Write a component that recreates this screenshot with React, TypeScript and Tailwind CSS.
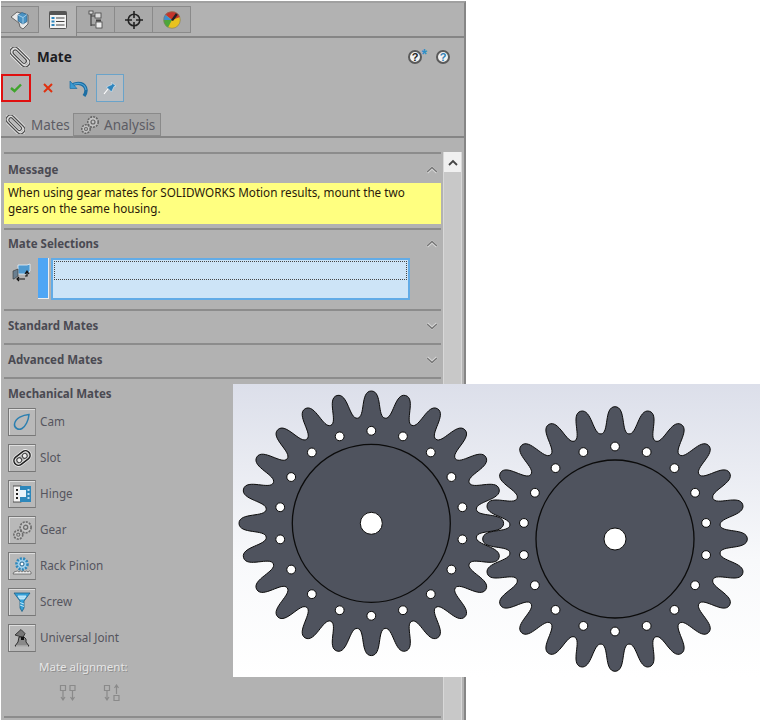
import type { ReactNode } from "react"

function gearPath(cx: number, cy: number) {
  // one tooth flank as a cubic in (degrees, radius), root to tip, then mirrored
  const flank = (t: number): [number, number] => {
    const u = 1 - t
    const deg = u * u * u * -7.5 + 3 * u * u * t * -3 + 3 * u * t * t * -4.9
    const r = 106 + 26.3 * (3 * u * t * t + t * t * t)
    return [deg, r]
  }
  const half: [number, number][] = []
  for (let i = 0; i <= 16; i++) half.push(flank(i / 16))
  const profile = [...half, ...half.slice(0, -1).reverse().slice(0, -1).map(([d, r]): [number, number] => [-d, r])]

  let d = ""
  for (let t = 0; t < 24; t++) {
    for (const [deg, r] of profile) {
      const a = ((t * 15 + deg) * Math.PI) / 180
      d += `${d ? "L" : "M"}${(cx + r * Math.cos(a)).toFixed(2)} ${(cy + r * Math.sin(a)).toFixed(2)}`
    }
  }
  return d + "Z"
}

function Gear({ cx, cy }: { cx: number; cy: number }) {
  const holes = Array.from({ length: 18 }, (_, i) => {
    const a = ((i * 20 + 10) * Math.PI) / 180
    return [cx + 92.5 * Math.cos(a), cy + 92.5 * Math.sin(a)]
  })
  return (
    <g stroke="#0b0b0b" fill="#4f535e">
      <path d={gearPath(cx, cy)} strokeWidth="1" />
      <circle cx={cx} cy={cy} r="79" strokeWidth="1.3" fill="none" />
      <circle cx={cx} cy={cy} r="11" strokeWidth="1" fill="#fff" />
      {holes.map(([x, y], i) => (
        <circle key={i} cx={x} cy={y} r="4.4" strokeWidth="1" fill="#fff" />
      ))}
    </g>
  )
}

function Clip({ size = 20 }: { size?: number }) {
  return (
    <svg width={size} height={size} viewBox="0 0 20 20" fill="none">
      <g transform="rotate(45 10 10)">
        <rect x="-2" y="5.500" width="24" height="9" rx="4.500" stroke="#ececec" strokeWidth="3" />
        <rect x="1" y="7.800" width="17" height="4.400" rx="2.200" stroke="#ececec" strokeWidth="2.600" />
        <rect x="-2" y="5.500" width="24" height="9" rx="4.500" stroke="#4d4d4d" strokeWidth="1.300" />
        <rect x="1" y="7.800" width="17" height="4.400" rx="2.200" stroke="#4d4d4d" strokeWidth="1.300" />
      </g>
    </svg>
  )
}

function Cogs({ size = 20, color = "#666" }: { size?: number; color?: string }) {
  return (
    <svg width={size} height={size} viewBox="0 0 20 20" fill="none" stroke={color}>
      <circle cx="13" cy="7" r="5.200" strokeWidth="1.600" strokeDasharray="2 1" fill="#c4c4c4" />
      <circle cx="13" cy="7" r="2" strokeWidth="1.200" />
      <circle cx="6" cy="14" r="4.200" strokeWidth="1.600" strokeDasharray="2 1" fill="#c4c4c4" />
      <circle cx="6" cy="14" r="1.500" strokeWidth="1.100" />
    </svg>
  )
}

function PartIcon() {
  return (
    <svg width="20" height="20" viewBox="0 0 20 20">
      <path d="M1 7 7 2l11 3v9l-5 5-3-2-1-4Z" fill="#e8e8e8" stroke="#666" />
      <path d="M8 5 12 2.500l5 2v7l-4 2.500-5-3Z" fill="#4a93c4" stroke="#2c5f85" strokeWidth=".7" />
      <path d="M8 5l5 2.500V14M13 7.500l4-3" stroke="#b6dcf2" strokeWidth=".8" fill="none" />
    </svg>
  )
}

function PropertyIcon() {
  return (
    <svg width="18" height="18" viewBox="0 0 18 18">
      <rect x=".5" y=".5" width="17" height="17" rx="1" fill="#f4f4f4" stroke="#555" />
      <rect x=".5" y=".5" width="17" height="3.500" fill="#555" />
      <path d="M2.500 6h3v2h-3ZM2.500 9.500h3v2h-3ZM2.500 13h3v2h-3Z" fill="#2f86bd" />
      <path d="M7 7h8.500M7 10.500h8.500M7 14h8.500" stroke="#444" strokeWidth="1.200" />
    </svg>
  )
}

function ConfigIcon() {
  return (
    <svg width="16" height="20" viewBox="0 0 16 20">
      <path d="M3 2v14M3 6h4M3 15h4" stroke="#444" strokeWidth="1.200" fill="none" />
      <rect x="1" y="1" width="4" height="3" fill="#ddd" stroke="#444" strokeWidth=".8" />
      <rect x="7" y="3" width="6" height="5" fill="#ddd" stroke="#444" strokeWidth=".8" />
      <rect x="8" y="12" width="6" height="6" fill="#eee" stroke="#444" strokeWidth=".8" />
      <path d="M8 9.500h5v2H8Z" fill="#444" />
    </svg>
  )
}

function TargetIcon() {
  return (
    <svg width="20" height="20" viewBox="0 0 20 20" fill="none" stroke="#222">
      <circle cx="10" cy="10" r="5.800" strokeWidth="1.600" />
      <path d="M10 1v7M10 12v7M1 10h7M12 10h7" strokeWidth="1.600" />
    </svg>
  )
}

function AppearanceIcon() {
  return (
    <svg width="18" height="18" viewBox="0 0 18 18">
      <circle cx="9" cy="9" r="8.500" fill="#e8c21f" />
      <path d="M9 9 2 3.500A8.500 8.500 0 0 1 9 .5Z" fill="#c6352a" />
      <path d="M9 9 .5 9A8.500 8.500 0 0 1 2 3.500Z" fill="#3f8fcf" />
      <path d="M9 9 .5 9A8.500 8.500 0 0 0 5 16.500Z" fill="#4da63a" />
      <path d="M9 .5A8.500 8.500 0 0 1 17 6L9 9Z" fill="#c6352a" />
      <path d="M8 9 13 2l2 1.500L10 10Z" fill="#222" />
      <circle cx="9" cy="9" r="8.300" fill="none" stroke="#777" strokeWidth=".6" />
    </svg>
  )
}

function Help({ star }: { star?: boolean }) {
  return (
    <span className="relative flex h-[14px] w-[14px] items-center justify-center rounded-full border-2 border-[#5a5a5a] bg-[#f2f2f2] font-['Liberation_Sans',sans-serif] text-[11px] font-bold leading-none">
      <span className={star ? "text-[#222]" : "text-[#2f7fb5]"}>?</span>
      {star && <span className="absolute -top-[5px] -right-[7px] text-[14px] leading-none text-[#2f8fc9]">*</span>}
    </span>
  )
}

function Caret({ up }: { up?: boolean }) {
  return (
    <svg width="12" height="8" viewBox="0 0 12 8" fill="none" className="mr-[2px]">
      <path d={up ? "M1 6.500 6 2l5 4.500" : "M1 1.500 6 6l5-4.500"} stroke="#f0f0f0" strokeWidth="3" opacity=".6" />
      <path d={up ? "M1 6 6 1.500 11 6" : "M1 2 6 6.500 11 2"} stroke="#777" strokeWidth="1.600" />
    </svg>
  )
}

function SectionHead({ title, up, className }: { title: string; up?: boolean; className: string }) {
  return (
    <div className={`flex items-center justify-between border-t-2 border-[#8c8c8c] pl-1 pr-[1px] ${className}`}>
      <span className="text-[11.5px] font-bold leading-none text-[#4a4a52]">{title}</span>
      <Caret up={up} />
    </div>
  )
}

function CamIcon() {
  return (
    <svg width="18" height="18" viewBox="0 0 18 18" fill="none">
      <path d="M16 1.500C10 2 2.500 5 1.500 11c-.5 4 4 6.500 7.500 4.500C12.500 13.500 15.500 7.500 16 1.500Z" stroke="#2b7fb0" strokeWidth="1.500" />
    </svg>
  )
}

function SlotIcon() {
  return (
    <svg width="20" height="20" viewBox="0 0 20 20" fill="none">
      <g transform="rotate(-38 10 10)">
        <rect x="1" y="5.500" width="18" height="9" rx="4.500" stroke="#eee" strokeWidth="3.200" />
        <rect x="1" y="5.500" width="18" height="9" rx="4.500" stroke="#222" strokeWidth="1.600" />
        <circle cx="6.500" cy="10" r="2.400" fill="#eee" stroke="#444" />
        <circle cx="13.500" cy="10" r="2.400" fill="#eee" stroke="#444" />
      </g>
    </svg>
  )
}

function HingeIcon() {
  return (
    <svg width="18" height="18" viewBox="0 0 18 18">
      <rect x="0" y="1" width="8" height="16" fill="#f4f4f4" stroke="#333" strokeWidth=".8" />
      <rect x="7" y="1" width="11" height="16" fill="#2d87bb" />
      <rect x="6" y="5" width="7" height="7" fill="#e8f3fa" />
      <path d="M3 4h2v2H3ZM3 8h2v2H3ZM3 12h2v2H3Z" fill="#222" />
      <path d="M14.500 4h2v2h-2ZM14.500 8h2v2h-2ZM14.500 12h2v2h-2Z" fill="#bcdcef" />
    </svg>
  )
}

function RackIcon() {
  return (
    <svg width="20" height="20" viewBox="0 0 20 20" fill="none">
      <circle cx="10" cy="8" r="5.500" stroke="#2d87bb" strokeWidth="2.600" strokeDasharray="2 1.300" fill="#9fd0ec" />
      <circle cx="10" cy="8" r="2" fill="#fff" stroke="#1f5f86" />
      <path d="M1 18h18v-2l-1.500-1-1.500 1-1.500-1-1.500 1-1.500-1-1.500 1-1.500-1-1.500 1-1.500-1L2 16Z" fill="#eee" stroke="#555" strokeWidth=".7" />
    </svg>
  )
}

function ScrewIcon() {
  return (
    <svg width="18" height="20" viewBox="0 0 18 20">
      <path d="M1 1h16L11 9v7l-2 3.500L7 16V9Z" fill="#35a0d8" stroke="#1d5f86" strokeWidth=".8" />
      <path d="M5 4h8L11 7H7ZM7 10.500l4 1.500M7 13l4 1.500" fill="#a9dcf5" stroke="#cfeefc" strokeWidth=".9" />
    </svg>
  )
}

function UJointIcon() {
  return (
    <svg width="18" height="20" viewBox="0 0 18 20">
      <path d="M2 7 8 1.500l4 4-2 4Z" fill="#777" stroke="#222" strokeWidth=".8" />
      <path d="M6 9h5l2 2v3l3 4H2l3-4Z" fill="#8a8a8a" stroke="#222" strokeWidth=".9" />
      <rect x="8" y="9" width="3" height="3" fill="#111" />
      <path d="M3 18h12" stroke="#eee" />
    </svg>
  )
}

function MateButton({ icon, label }: { icon: ReactNode; label: string }) {
  return (
    <div className="flex h-[36px] items-start pl-1">
      <div className="flex h-[28px] w-[28px] items-center justify-center border border-[#777] border-r-[#8a8a8a] bg-[#b9b9b9] shadow-[inset_1px_1px_0_#dedede]">
        {icon}
      </div>
      <span className="ml-[4px] mt-[8px] text-[11.7px] leading-none text-[#55555e]">{label}</span>
    </div>
  )
}

function AlignIcon({ flip }: { flip?: boolean }) {
  return (
    <svg width="18" height="18" viewBox="0 0 18 18" fill="none" stroke="#8a8a8a" strokeWidth="1.200">
      <path d="M1.500 1.500h5v5h-5ZM4 7v8M2 13l2 3 2-3" />
      {flip ? (
        <path d="M11 11.500h5v5h-5ZM13.500 10V2M11.500 4l2-3 2 3" />
      ) : (
        <path d="M11 1.500h5v5h-5ZM13.500 7v8M11.500 13l2 3 2-3" />
      )}
    </svg>
  )
}

export default function App() {
  const tabs = [<PartIcon key="a" />, <PropertyIcon key="b" />, <ConfigIcon key="c" />, <TargetIcon key="d" />, <AppearanceIcon key="e" />]

  return (
    <div className="relative h-[720px] w-[760px] overflow-hidden bg-white font-['Noto_Sans','Open_Sans',sans-serif]">
      <div className="ml-[1px] mt-[1px] flex h-[719px] w-[465px] flex-col overflow-hidden border-t-2 border-r-2 border-t-[#a0a0a0] border-r-[#868686] bg-[#b2b2b2]">
        {/* feature manager tabs */}
        <div className="flex h-[35px] shrink-0 items-end border-b-2 border-[#858585]">
          <div className="flex h-[30px] items-stretch pb-[3px]">
            {tabs.map((t, i) => (
              <div
                key={i}
                className={
                  i === 1
                    ? "-mb-[3px] flex w-[38px] items-center justify-center border-r border-[#868686] bg-[#b4b4b4] pb-[3px]"
                    : "flex w-[38px] items-center justify-center border-y border-r border-[#8a8a8a] bg-[#a9a9a9]"
                }
              >
                {t}
              </div>
            ))}
          </div>
        </div>

        <div className="flex h-[36px] shrink-0 items-center pl-[9px] pr-[14px] pt-[2px]">
          <Clip />
          <span className="ml-[7px] mt-[2px] text-[13.5px] font-bold leading-none text-[#1c1c22]">Mate</span>
          <div className="ml-auto flex items-center gap-[14px]">
            <Help star />
            <Help />
          </div>
        </div>

        {/* ok / cancel row */}
        <div className="flex h-[28px] shrink-0 items-center">
          <div className="flex h-[28px] w-[30px] items-center justify-center border-2 border-[#e01010]">
            <svg width="12" height="10" viewBox="0 0 12 10" fill="none">
              <path d="M1 5l3.500 3L11 1.500" stroke="#3fa52c" strokeWidth="2.400" />
            </svg>
          </div>
          <div className="flex w-[33px] items-center justify-center">
            <svg width="10" height="10" viewBox="0 0 10 10" fill="none">
              <path d="M1 1l8 8M9 1 1 9" stroke="#e0300f" strokeWidth="2" />
            </svg>
          </div>
          <div className="flex w-[28px] items-center justify-center">
            <svg width="19" height="19" viewBox="0 0 19 19" fill="none">
              <path d="M3 6c6-3 13-2 14 5 .2 2-.6 4-2 6" stroke="#1d6ea3" strokeWidth="3.400" />
              <path d="M3 6c6-3 13-2 14 5" stroke="#4fa4d6" strokeWidth="1.200" />
              <path d="M1 2V9.500h7Z" fill="#3b9ad2" stroke="#1d6ea3" strokeWidth=".7" />
            </svg>
          </div>
          <div className="ml-[4px] flex h-[28px] w-[28px] items-center justify-center border border-[#6aa3c9] bg-[#b8bcc0]">
            <svg width="14" height="14" viewBox="0 0 14 14">
              <path d="M1 13l4-5" stroke="#fff" strokeWidth="1.200" />
              <path d="M3.500 6 9 3.500 8.500 1.500 13 5l-2 .5-2.500 5.500Z" fill="#2d84bd" stroke="#eef6fb" strokeWidth=".5" />
            </svg>
          </div>
        </div>

        {/* mates / analysis tabs */}
        <div className="mt-[11px] flex h-[25px] shrink-0 items-stretch border-b-2 border-[#858585]">
          <div className="-mb-[2px] flex w-[73px] items-center border-r border-[#8a8a8a] pl-[5px] pb-[2px]">
            <Clip size={19} />
            <span className="ml-[6px] mt-[2px] text-[13.5px] leading-none text-[#5c5c64]">Mates</span>
          </div>
          <div className="flex w-[87px] items-center border-y border-r border-[#8a8a8a] bg-[#a6a6a6] pl-[6px]">
            <Cogs size={20} />
            <span className="ml-[4px] mt-[2px] text-[13.5px] leading-none text-[#5c5c64]">Analysis</span>
          </div>
        </div>

        {/* body and scrollbar */}
        <div className="mt-[14px] flex min-h-0 flex-1">
          <div className="w-[440px] shrink-0 pl-[3px]">
            <SectionHead title="Message" up className="h-[31px] pt-[2px]" />
            <div className="h-[41px] bg-[#ffff80] pl-1 pt-[1px] text-[11.7px] leading-[16px] text-[#2a1a0a]">
              When using gear mates for SOLIDWORKS Motion results, mount the two
              <br />
              gears on the same housing.
            </div>
            <div className="h-[4px]" />
            <SectionHead title="Mate Selections" up className="h-[30px]" />
            <div className="flex h-[51px] items-start">
              <div className="flex w-[34px] justify-center pl-[2px] pt-[4px]">
                <svg width="20" height="20" viewBox="0 0 20 20">
                  <path d="M6 3h9l3-1v7l-3 3H6Z" fill="#4f9ad0" stroke="#e8f3fa" strokeWidth=".8" />
                  <path d="M1 9l5-2v7l-4 3H1Z" fill="#6a7f90" stroke="#333" strokeWidth=".6" />
                  <path d="M5 17h8M7 15l-2 2 2 2M15 9v5h-2M13 12l2-3 2 3" stroke="#111" strokeWidth="1.200" fill="none" />
                </svg>
              </div>
              <div className="h-[41px] w-[11px] border-r border-b border-[#eeeeee] bg-[#4ea6f5]" />
              <div className="ml-[2px] h-[42px] w-[359px] border-2 border-[#62abe6] bg-[#cde4f7] p-[1px]">
                <div className="h-[19px] border border-dotted border-[#444]" />
              </div>
            </div>
            <SectionHead title="Standard Mates" className="h-[34px] pb-[2px]" />
            <SectionHead title="Advanced Mates" className="h-[34px] pb-[2px]" />
            <div className="border-t-2 border-[#8c8c8c] pl-1 pt-[8px] text-[11.5px] font-bold leading-[13px] text-[#4a4a52]">
              Mechanical Mates
            </div>
            <div className="mt-[8px]">
              <MateButton icon={<CamIcon />} label="Cam" />
              <MateButton icon={<SlotIcon />} label="Slot" />
              <MateButton icon={<HingeIcon />} label="Hinge" />
              <MateButton icon={<Cogs size={21} color="#6e6e6e" />} label="Gear" />
              <MateButton icon={<RackIcon />} label="Rack Pinion" />
              <MateButton icon={<ScrewIcon />} label="Screw" />
              <MateButton icon={<UJointIcon />} label="Universal Joint" />
            </div>
            <div className="pl-[35px] text-[11.5px] leading-[14px] text-[#e6e6e6] [text-shadow:1px_1px_0_#8f8f8f]">
              Mate alignment:
            </div>
            <div className="mt-[10px] flex gap-[26px] pl-[55px]">
              <AlignIcon />
              <AlignIcon flip />
            </div>
            <div className="mt-[14px] border-t-2 border-[#8c8c8c]" />
          </div>
          <div className="ml-[2px] flex w-[19px] flex-col border-x border-[#d8d8d8] bg-[#c8c8c8]">
            <div className="flex h-[20px] items-center justify-center bg-[#f0f0f0]">
              <svg width="10" height="7" viewBox="0 0 10 7" fill="none">
                <path d="M1 6l4-4 4 4" stroke="#444" strokeWidth="1.800" />
              </svg>
            </div>
          </div>
        </div>
      </div>

      {/* graphics area sits over the panel */}
      <div className="absolute left-[233px] top-[384px] h-[293px] w-[527px] bg-gradient-to-b from-[#dcdfea] via-[#f8f9fb] via-60% to-white">
        <svg width="527" height="293" viewBox="233 384 527 293" className="block">
          <Gear cx={371.3} cy={523.3} />
          <Gear cx={615} cy={539} />
        </svg>
      </div>
    </div>
  )
}
